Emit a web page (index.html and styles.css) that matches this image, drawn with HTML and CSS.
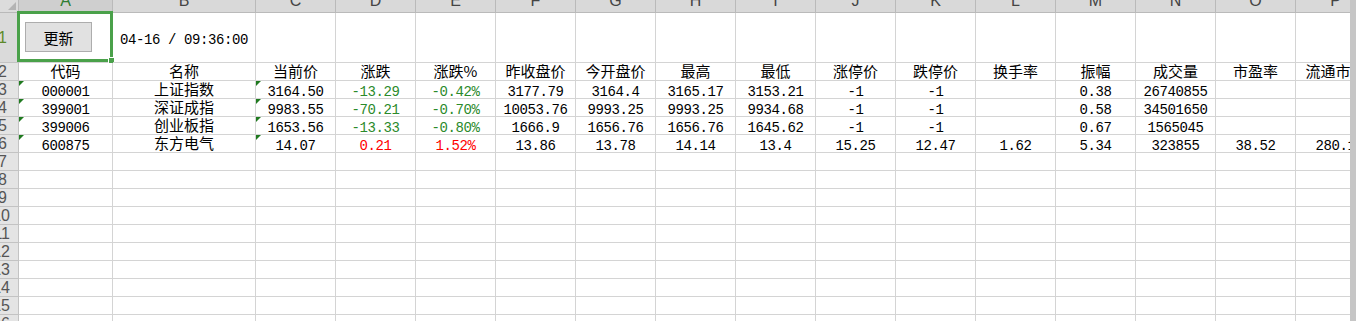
FILE: index.html
```html
<!DOCTYPE html>
<html lang="zh-CN">
<head>
  <meta charset="UTF-8">
  <title>行情</title>
  <link rel="stylesheet" href="styles.css">
</head>
<body>

<div class="book">
  <div class="sheet" id="sheet"></div>
  <div class="vscroll"></div>
</div>

<script>
  const letters = 'ABCDEFGHIJKLMNOP'.split('');
  const header = ['代码', '名称', '当前价', '涨跌', '涨跌%', '昨收盘价', '今开盘价', '最高', '最低',
                  '涨停价', '跌停价', '换手率', '振幅', '成交量', '市盈率', '流通市值'];
  const quotes = [
    ['000001', '上证指数', '3164.50', '-13.29', '-0.42%', '3177.79', '3164.4', '3165.17', '3153.21', '-1', '-1', '', '0.38', '26740855', '', ''],
    ['399001', '深证成指', '9983.55', '-70.21', '-0.70%', '10053.76', '9993.25', '9993.25', '9934.68', '-1', '-1', '', '0.58', '34501650', '', ''],
    ['399006', '创业板指', '1653.56', '-13.33', '-0.80%', '1666.9', '1656.76', '1656.76', '1645.62', '-1', '-1', '', '0.67', '1565045', '', ''],
    ['600875', '东方电气', '14.07', '0.21', '1.52%', '13.86', '13.78', '14.14', '13.4', '15.25', '12.47', '1.62', '5.34', '323855', '38.52', '280.1']
  ];
  const lastRow = 16;

  let html = '<div class="corner"></div>';
  letters.forEach((l, i) => {
    html += `<div class="colhead${i === 0 ? ' active' : ''}">${l}</div>`;
  });

  // row 1: refresh button + update time
  html += '<div class="rowhead tall active"><span>1</span></div>';
  html += `<div class="cell a1">
      <button class="refresh">更新</button>
      <div class="sel"><span class="handle"></span></div>
    </div>`;
  html += '<div class="cell num stamp">04-16 / 09:36:00</div>';
  for (let i = 2; i < letters.length; i++) html += '<div class="cell"></div>';

  // row 2: titles
  html += '<div class="rowhead"><span>2</span></div>';
  header.forEach(h => { html += `<div class="cell cn">${h}</div>`; });

  // quote rows
  quotes.forEach((q, r) => {
    html += `<div class="rowhead"><span>${r + 3}</span></div>`;
    const up = parseFloat(q[3]) > 0;
    q.forEach((v, c) => {
      let cls = c === 1 ? 'cell cn' : 'cell num';
      if (c === 0 || c === 2) cls += ' tag';
      if (c === 3 || c === 4) cls += up ? ' up' : ' down';
      html += `<div class="${cls}">${v}</div>`;
    });
  });

  // empty rows
  for (let r = quotes.length + 3; r <= lastRow; r++) {
    html += `<div class="rowhead${r > 9 ? ' wide' : ''}"><span>${r}</span></div>`;
    for (let c = 0; c < letters.length; c++) html += '<div class="cell"></div>';
  }

  document.getElementById('sheet').innerHTML = html;
</script>

</body>
</html>
```

FILE: styles.css
```css
body {
  margin: 0;
  background: #fff;
  overflow: hidden;
}
.book {
  display: flex;
  width: 1356px;
  height: 321px;
  overflow: hidden;
}
.sheet {
  flex: 0 0 1350px;
  overflow: hidden;
  display: grid;
  grid-template-columns: 19px 94px 143px repeat(14, 80px);
  grid-template-rows: 13px 50px repeat(15, 18px);
  align-content: start;
}
.vscroll {
  flex: 0 0 6px;
  background: #c6c6c6;
}

.corner, .colhead, .rowhead, .cell {
  box-sizing: border-box;
  border-right: 1px solid #d4d4d4;
  border-bottom: 1px solid #d4d4d4;
  white-space: nowrap;
}

/* headers */
.corner {
  position: relative;
  background: #dcdcdc;
  border-color: #b9b9b9;
}
.corner::after {
  content: '';
  position: absolute;
  right: 2px;
  bottom: 2px;
  border-left: 8px solid transparent;
  border-bottom: 8px solid #b4b4b4;
}
.colhead {
  background: #d9d9d9;
  border-color: #bababa;
  color: #444;
  font: 16px/1px "Liberation Sans", sans-serif;
  text-align: center;
  overflow: hidden;
}
.colhead.active {
  background: #cfcfcf;
  color: #2f7d32;
}
/* row numbers are right-aligned and spill out on the left */
.rowhead {
  display: flex;
  justify-content: flex-end;
  background: #e4e4e4;
  border-color: #c3c3c3;
  color: #555;
  font: 16px/17px "Liberation Sans", sans-serif;
  padding-right: 11px;
  overflow: hidden;
}
.rowhead span {
  flex: none;
}
.rowhead.wide {
  padding-right: 8px;
}
.rowhead.tall {
  line-height: 50px;
}
.rowhead.active {
  background: #dadada;
  color: #5d8a2a;
}

/* cells */
.cell {
  position: relative;
  text-align: center;
  color: #000;
}
.num {
  font: 14px/17px "Liberation Mono", monospace;
  letter-spacing: -0.4px;
  padding-top: 3px;
}
.cn {
  font: 15px/15px "Noto Sans CJK SC", sans-serif;
}
.up {
  color: #ff0000;
}
.down {
  color: #2b8a2b;
}
.tag::before {
  content: '';
  position: absolute;
  left: 0;
  top: 0;
  border-top: 5px solid #1f7a1f;
  border-right: 5px solid transparent;
}

.a1 {
  padding: 9px 0 0 6px;
  text-align: left;
}
.refresh {
  width: 67px;
  height: 30px;
  padding: 0;
  background: #e1e1e1;
  border: 1px solid #adadad;
  border-radius: 0;
  font: 15px "Noto Sans CJK SC", sans-serif;
  color: #000;
}
.sel {
  position: absolute;
  left: -2px;
  top: -2px;
  right: -1px;
  bottom: 0;
  border: 3px solid #4aa14a;
}
.handle {
  position: absolute;
  right: -5px;
  bottom: -5px;
  width: 5px;
  height: 5px;
  background: #4aa14a;
  border: 1px solid #fff;
}
.stamp {
  text-align: left;
  line-height: 50px;
  padding: 2px 0 0 7px;
}
```
